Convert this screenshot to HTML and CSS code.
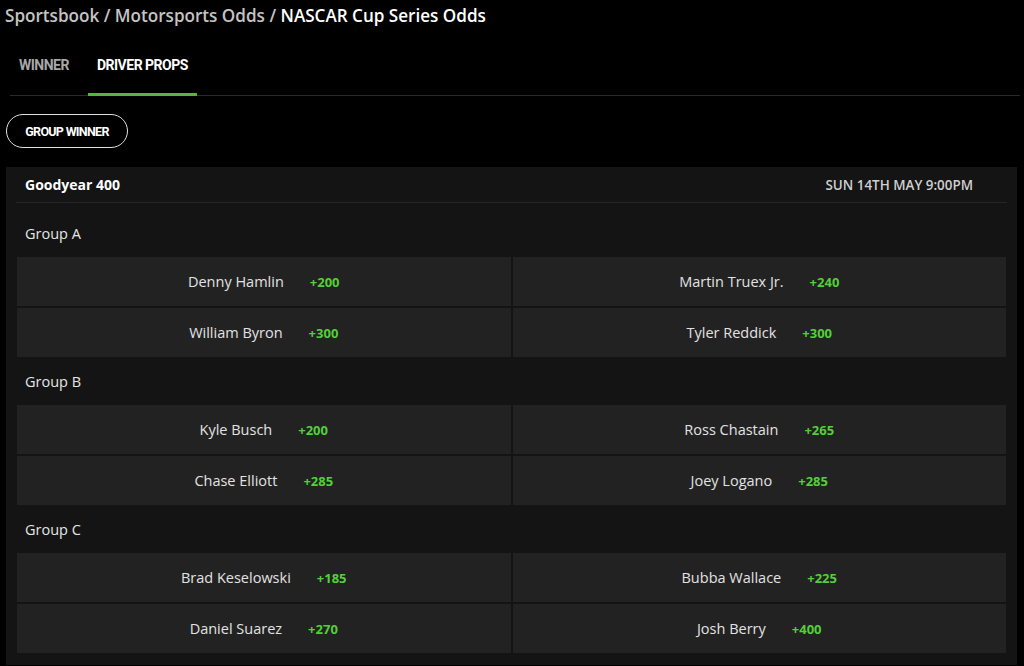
FILE: index.html
```html
<!DOCTYPE html>
<html>
<head>
<meta charset="utf-8">
<link rel="stylesheet" href="styles.css">
</head>
<body>
<div class="breadcrumb"><span class="crumb">Sportsbook</span> <span class="crumb">/</span> <span class="crumb">Motorsports Odds</span> <span class="crumb">/</span> <span class="current">NASCAR Cup Series Odds</span></div>
<div class="tabs">
  <div class="tab">WINNER</div>
  <div class="tab active">DRIVER PROPS</div>
</div>
<div class="filters"><button class="pill">GROUP WINNER</button></div>
<div class="card">
  <div class="card-head"><span class="event">Goodyear 400</span><span class="date">SUN 14TH MAY 9:00PM</span></div>
  <div class="groups">
    <div class="group-label">Group A</div>
    <div class="grid">
      <div class="cell"><span class="name">Denny Hamlin</span><span class="odds">+200</span></div>
      <div class="cell"><span class="name">Martin Truex Jr.</span><span class="odds">+240</span></div>
      <div class="cell"><span class="name">William Byron</span><span class="odds">+300</span></div>
      <div class="cell"><span class="name">Tyler Reddick</span><span class="odds">+300</span></div>
    </div>
    <div class="group-label">Group B</div>
    <div class="grid">
      <div class="cell"><span class="name">Kyle Busch</span><span class="odds">+200</span></div>
      <div class="cell"><span class="name">Ross Chastain</span><span class="odds">+265</span></div>
      <div class="cell"><span class="name">Chase Elliott</span><span class="odds">+285</span></div>
      <div class="cell"><span class="name">Joey Logano</span><span class="odds">+285</span></div>
    </div>
    <div class="group-label">Group C</div>
    <div class="grid">
      <div class="cell"><span class="name">Brad Keselowski</span><span class="odds">+185</span></div>
      <div class="cell"><span class="name">Bubba Wallace</span><span class="odds">+225</span></div>
      <div class="cell"><span class="name">Daniel Suarez</span><span class="odds">+270</span></div>
      <div class="cell"><span class="name">Josh Berry</span><span class="odds">+400</span></div>
    </div>
  </div>
</div>
</body>
</html>
```
FILE: styles.css
```css
html, body {
  margin: 0;
  padding: 0;
  background: #000;
  height: 666px;
  overflow: hidden;
}
body {
  font-family: "Open Sans", "Noto Sans", sans-serif;
  color: #ddd;
}
.breadcrumb {
  padding: 4px 5px;
  line-height: 24px;
  font-size: 17.1px;
  font-weight: 600;
  white-space: nowrap;
}
.crumb { color: #c4c4c4; }
.current { color: #fff; }
.tabs {
  display: flex;
  gap: 10px;
  margin: 8px 4px 0 10px;
  border-bottom: 1px solid #2a2a2a;
}
.tab {
  font-family: Roboto, "Liberation Sans", sans-serif;
  font-weight: 700;
  font-size: 14px;
  letter-spacing: -0.5px;
  line-height: 18px;
  padding: 16px 9px 19px 9px;
  border-bottom: 3px solid transparent;
  margin-bottom: -1px;
  color: #a8a8a8;
}
.tab.active {
  color: #fff;
  border-bottom-color: #53b83a;
}
.filters {
  padding: 18px 6px 19px;
}
.pill {
  display: block;
  width: 122px;
  height: 34px;
  border: 1.5px solid #e0e0e0;
  border-radius: 17px;
  background: #000;
  color: #fff;
  font-family: Roboto, "Liberation Sans", sans-serif;
  font-weight: 700;
  font-size: 12.5px;
  letter-spacing: -0.7px;
  padding: 0;
}
.card {
  margin: 0 7px 0 6px;
  background: #141414;
  padding: 0 10px 12px;
}
.card-head {
  display: flex;
  justify-content: space-between;
  align-items: center;
  height: 35px;
  padding: 0 34px 0 9px;
  border-bottom: 1px solid #262626;
}
.event {
  font-size: 14px;
  font-weight: 700;
  color: #fff;
}
.date {
  font-size: 13.4px;
  font-weight: 600;
  color: #cfcfcf;
}
.groups {
  padding-top: 6px;
}
.group-label {
  padding: 16px 9px 14px;
  line-height: 18px;
  font-size: 14.5px;
  color: #e6e6e6;
}
.grid {
  display: grid;
  grid-template-columns: 1fr 1fr;
  gap: 2px;
  margin: 0 1px;
}
.cell {
  height: 49px;
  background: #222;
  display: flex;
  justify-content: center;
  align-items: center;
  gap: 26px;
}
.name {
  font-size: 14.5px;
  color: #e2e2e2;
}
.odds {
  font-size: 13px;
  font-weight: 700;
  color: #53d038;
}
```
